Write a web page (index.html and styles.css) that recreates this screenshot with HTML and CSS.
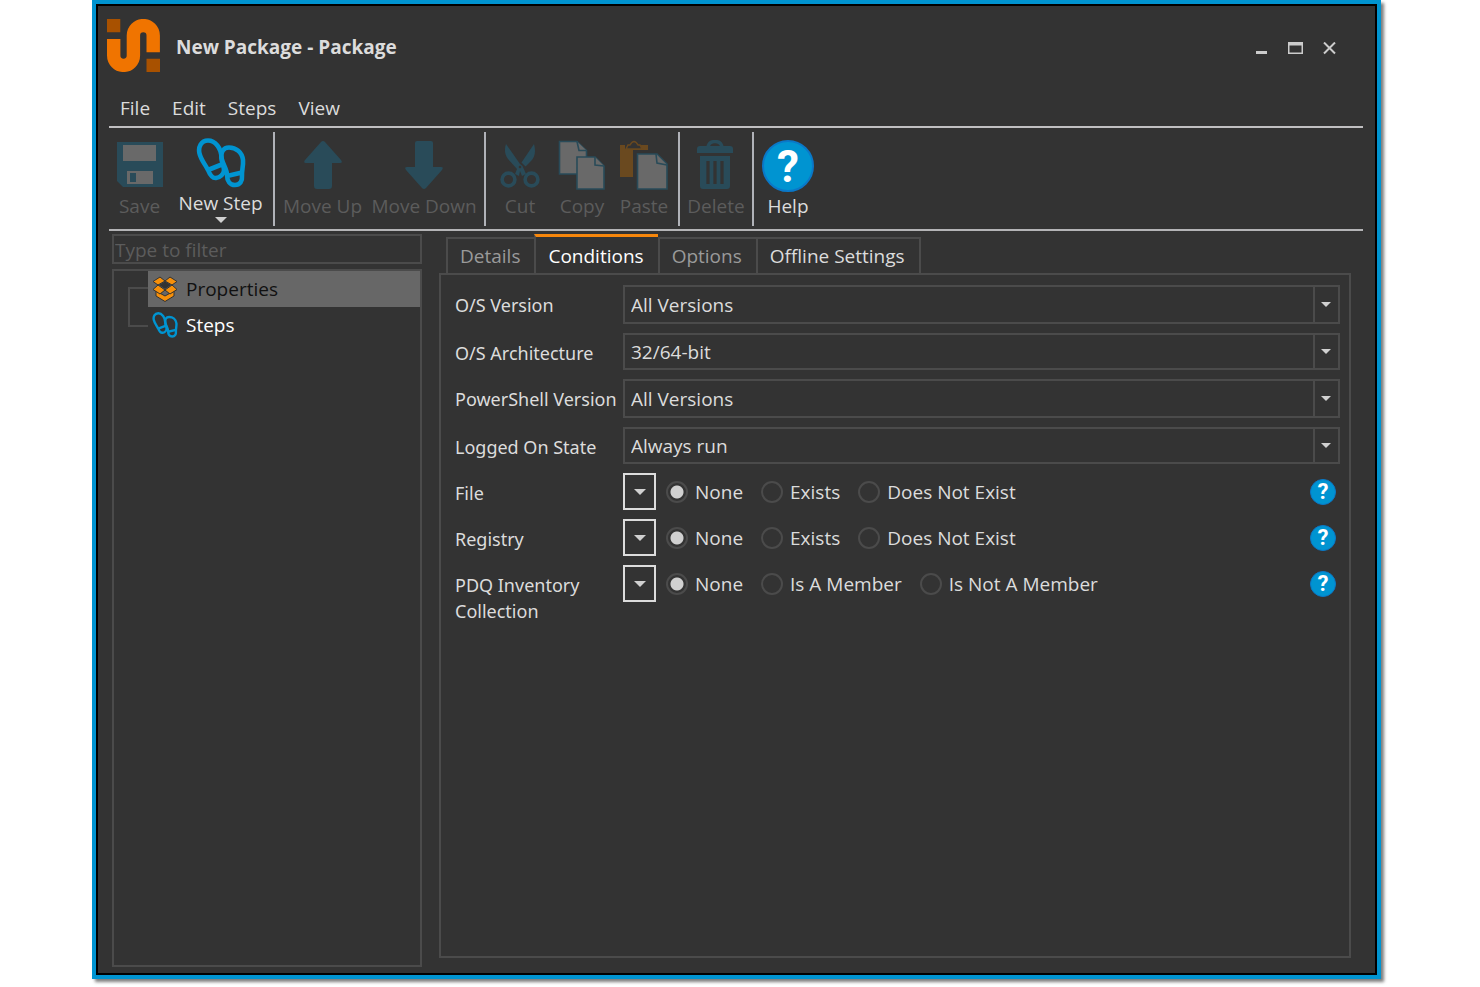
FILE: index.html
```html
<!DOCTYPE html>
<html lang="en">
<head>
  <meta charset="UTF-8">
  <title>New Package - Package</title>
  <link rel="stylesheet" href="styles.css">
</head>
<body>
  <!-- shared icons -->
  <svg class="icon-defs" aria-hidden="true">
    <symbol id="footprints" viewBox="0 0 50 50">
      <g fill="none" stroke="#0094d1" stroke-width="4.600" stroke-linejoin="round">
        <path d="M12 2.500C5 2.500 2 9 3.500 15.500C5 22 9 26 12 32C14 37 16 40.500 20 40C24 39.500 28 36 28 32C28 28 25.500 25 25.500 20C25.500 10 19 2.500 12 2.500Z"/>
        <path d="M12 32L27 26"/>
        <path d="M33 9.500C27 9.500 24.500 15 25.500 20C27 27 31 31 31 37C31 43 34 47 39 47C44 47 46.500 43 46 38C45.500 33 47.500 28 47 22C46 14 40 9.500 33 9.500Z"/>
        <path d="M31 38L46 34.500"/>
      </g>
    </symbol>
  </svg>

  <div class="window">
    <header class="title-bar">
      <svg class="logo" viewBox="0 0 53 53" aria-hidden="true">
        <path d="M0 0H13.300V13.300H0ZM39.500 39.700H53V53H39.500Z" fill="#a85100"/>
        <path d="M6.700 20V36.500a9.800 9.800 0 0 0 19.700 0V16.500a9.800 9.800 0 0 1 19.800 0V33.300" fill="none" stroke="#f07400" stroke-width="13.400"/>
      </svg>
      <h1>New Package - Package</h1>
      <div class="window-controls">
        <button aria-label="Minimize"><svg width="16" height="14"><path d="M2 9H13V12H2Z" fill="#ccc"/></svg></button>
        <button aria-label="Maximize"><svg width="16" height="14"><path d="M0 0H15V12H0ZM1.500 3.500V10.500H13.500V3.500Z" fill="#ccc" fill-rule="evenodd"/></svg></button>
        <button aria-label="Close"><svg width="16" height="14"><path d="M2 0.500L13 11.500M13 0.500L2 11.500" stroke="#ccc" stroke-width="2"/></svg></button>
      </div>
    </header>

    <nav class="menu">
      <button>File</button>
      <button>Edit</button>
      <button>Steps</button>
      <button>View</button>
    </nav>

    <div class="toolbar">
      <div class="tool-group">
        <button class="tool save" disabled>
          <svg width="46" height="50" viewBox="0 0 46 50">
            <path d="M0 2H46V47H6L0 41Z" fill="#294b59"/>
            <path d="M6 5H39V21H6ZM10 31H36V44H10Z" fill="#696969"/>
            <path d="M13 33H19V42H13Z" fill="#294b59"/>
          </svg>
          <span>Save</span>
        </button>
        <button class="tool new-step">
          <svg width="50" height="50"><use href="#footprints"/></svg>
          <span>New Step</span>
          <i class="arrow"></i>
        </button>
      </div>
      <div class="tool-group">
        <button class="tool move-up" disabled>
          <svg width="38" height="50" viewBox="0 0 38 50"><path d="M19 1Q20 1 21 2L37 20Q39 23 36 23H28V46Q28 49 25 49H13Q10 49 10 46V23H2Q-1 23 1 20L17 2Q18 1 19 1Z" fill="#294b59"/></svg>
          <span>Move Up</span>
        </button>
        <button class="tool move-down" disabled>
          <svg width="38" height="50" viewBox="0 0 38 50"><path d="M10 3Q10 1 12 1H26Q28 1 28 3V27H36Q39 27 37 30L21 48Q19 50 17 48L1 30Q-1 27 2 27H10Z" fill="#294b59"/></svg>
          <span>Move Down</span>
        </button>
      </div>
      <div class="tool-group">
        <button class="tool" disabled>
          <svg width="40" height="50" viewBox="0 0 40 50">
            <path d="M6 4C4 10 5 15 8 19L17 29L15 34L19 36L20 31L22 36L26 34L22.500 26L20 24ZM34 4C36 11 35 17 31 21L25.500 26.500L21.500 22.500Z" fill="#294b59"/>
            <g fill="none" stroke="#294b59" stroke-width="3.600"><circle cx="8.500" cy="39.500" r="6.400"/><circle cx="31.500" cy="39.500" r="6.400"/></g>
            <circle cx="20" cy="27" r="1.300" fill="#333"/>
          </svg>
          <span>Cut</span>
        </button>
        <button class="tool" disabled>
          <svg width="48" height="50" viewBox="0 0 48 50">
            <g fill="#696969" stroke="#294b59" stroke-width="1.600">
              <path d="M1.500 1.500H19L28.500 10.500V34H1.500Z"/><path d="M19 1.500L21 10.500H28.500"/>
              <path d="M19 17H37L46 26V49H19Z"/><path d="M37 17V25L46 26"/>
            </g>
          </svg>
          <span>Copy</span>
        </button>
        <button class="tool" disabled>
          <svg width="50" height="50" viewBox="0 0 50 50">
            <path d="M1 5H6V9H22V5H29V10H14V37H1Z" fill="#6a491f"/>
            <path d="M7 9L9 5H11Q15-2 19 5H21L23 9Z" fill="none" stroke="#6a491f" stroke-width="1.500"/>
            <g fill="#696969" stroke="#294b59" stroke-width="1.600"><path d="M18.500 14H38L48 24V49H18.500Z"/><path d="M37 14L38 23L48 25"/></g>
          </svg>
          <span>Paste</span>
        </button>
      </div>
      <div class="tool-group">
        <button class="tool delete" disabled>
          <svg width="38" height="50" viewBox="0 0 38 50">
            <path d="M11 7Q12 1.500 18 1.500T25 7" fill="none" stroke="#294b59" stroke-width="3.500"/>
            <path d="M3 6H33Q36 6 36 9V13H0V9Q0 6 3 6ZM3 16H33V46Q33 49 30 49H6Q3 49 3 46Z" fill="#294b59"/>
            <path d="M11 21V44M18 21V44M25 21V44" stroke="#333" stroke-width="3.200"/>
          </svg>
          <span>Delete</span>
        </button>
      </div>
      <div class="tool-group">
        <button class="tool help">
          <b class="help-icon large">?</b>
          <span>Help</span>
        </button>
      </div>
    </div>

    <main class="workspace">
      <aside class="sidebar">
        <input class="filter" type="text" placeholder="Type to filter" aria-label="Type to filter">
        <ul class="tree">
          <li>
            <button class="node selected">
              <svg width="26" height="26" viewBox="0 0 26 26">
                <g fill="#f7900a" stroke="#333" stroke-width="1" stroke-linejoin="round">
                  <path d="M4 15L13 20L22 15V20L13 25.500L4 20Z"/>
                  <path d="M8 1L13 5L6 9L1 5.500ZM18 1L25 5.500L20 9L13 5ZM6 9L13 14L8 18L1 13.500ZM20 9L25 13.500L18 18L13 14Z"/>
                </g>
                <path d="M13 5.500L19 9L13 13L7 9Z" fill="#333"/>
              </svg>
              Properties
            </button>
          </li>
          <li>
            <button class="node">
              <svg width="26" height="26"><use href="#footprints"/></svg>
              Steps
            </button>
          </li>
        </ul>
      </aside>

      <section class="editor">
        <div class="tabs" role="tablist">
          <button class="tab" role="tab">Details</button>
          <button class="tab active" role="tab" aria-selected="true">Conditions</button>
          <button class="tab" role="tab">Options</button>
          <button class="tab bright" role="tab">Offline Settings</button>
        </div>
        <form class="panel" role="tabpanel">
          <div class="row tall">
            <label for="osVersion">O/S Version</label>
            <div class="select"><select id="osVersion"><option>All Versions</option></select></div>
          </div>
          <div class="row">
            <label for="osArch">O/S Architecture</label>
            <div class="select"><select id="osArch"><option>32/64-bit</option></select></div>
          </div>
          <div class="row tall">
            <label for="psVersion">PowerShell Version</label>
            <div class="select"><select id="psVersion"><option>All Versions</option></select></div>
          </div>
          <div class="row">
            <label for="loggedOn">Logged On State</label>
            <div class="select"><select id="loggedOn"><option>Always run</option></select></div>
          </div>

          <div class="row" role="radiogroup" aria-labelledby="fileLabel">
            <span class="row-label" id="fileLabel">File</span>
            <div class="choices">
              <button type="button" class="drop" aria-label="File menu"><i class="arrow"></i></button>
              <label><input type="radio" name="file" checked>None</label>
              <label><input type="radio" name="file">Exists</label>
              <label><input type="radio" name="file">Does Not Exist</label>
              <button type="button" class="help-icon" aria-label="Help">?</button>
            </div>
          </div>
          <div class="row" role="radiogroup" aria-labelledby="registryLabel">
            <span class="row-label" id="registryLabel">Registry</span>
            <div class="choices">
              <button type="button" class="drop" aria-label="Registry menu"><i class="arrow"></i></button>
              <label><input type="radio" name="registry" checked>None</label>
              <label><input type="radio" name="registry">Exists</label>
              <label><input type="radio" name="registry">Does Not Exist</label>
              <button type="button" class="help-icon" aria-label="Help">?</button>
            </div>
          </div>
          <div class="row" role="radiogroup" aria-labelledby="collectionLabel">
            <span class="row-label" id="collectionLabel">PDQ Inventory Collection</span>
            <div class="choices">
              <button type="button" class="drop" aria-label="Collection menu"><i class="arrow"></i></button>
              <label><input type="radio" name="collection" checked>None</label>
              <label><input type="radio" name="collection">Is A Member</label>
              <label><input type="radio" name="collection">Is Not A Member</label>
              <button type="button" class="help-icon" aria-label="Help">?</button>
            </div>
          </div>
        </form>
      </section>
    </main>
  </div>
</body>
</html>
```

FILE: styles.css
```css
* {
  box-sizing: border-box;
}
body {
  margin: 0;
  background: #fff;
  color: #dcdcdc;
  font: 19px/26px "Open Sans", "Noto Sans", sans-serif;
}
button, input, select {
  font: inherit;
  color: inherit;
  background: none;
  border: none;
  margin: 0;
  padding: 0;
}
svg {
  display: block;
}
.icon-defs {
  width: 0;
  height: 0;
  position: absolute;
}
.window {
  display: flex;
  flex-direction: column;
  min-height: calc(100vh - 8px);
  margin: 0 99px 8px 92px;
  padding: 15px 14px 8px 13px;
  background: #333;
  border: 4px solid #0094d1;
  box-shadow: inset 0 0 0 2px #000, 3px 3px 3px rgba(0, 0, 0, 0.5);
}

/* Title bar */
.title-bar {
  display: flex;
  align-items: center;
}
.logo {
  width: 53px;
  height: 53px;
  margin-left: -2px;
}
.title-bar h1 {
  margin: 0 0 0 16px;
  padding-top: 2px;
  font-size: 19px;
  font-weight: bold;
}
.window-controls {
  display: flex;
  gap: 18px;
  margin-left: auto;
  margin-right: 25px;
  padding-top: 6px;
}

/* Menu */
.menu {
  display: flex;
  gap: 22px;
  height: 56px;
  padding: 18px 11px 0;
  border-bottom: 2px solid #c0bfc1;
}

/* Toolbar */
.toolbar {
  display: flex;
  padding: 4px 0 3px;
  border-bottom: 2px solid #b4b4b6;
}
.tool-group {
  display: flex;
  height: 94px;
  padding: 0 3px;
  border-right: 2px solid #b0b2b8;
}
.tool-group:last-child {
  border: none;
}
.tool {
  display: flex;
  flex-direction: column;
  align-items: center;
  width: 62px;
  padding-top: 8px;
  white-space: nowrap;
}
.tool svg {
  flex: none;
}
.tool span {
  margin-top: 3px;
}
.tool:disabled {
  color: #5c5c5c;
}
.save {
  width: 55px;
}
.new-step {
  width: 103px;
  padding: 6px 0 0 4px;
}
.new-step span {
  margin: 2px 0 1px;
}
.move-up {
  width: 89px;
}
.move-down {
  width: 114px;
}
.delete {
  width: 66px;
}
.help span {
  margin-top: 1px;
}
.arrow {
  width: 0;
  height: 0;
  border: 6px solid transparent;
  border-top-color: #d0d0d0;
  border-bottom: none;
}
.help-icon {
  width: 26px;
  height: 26px;
  background: #0094d1;
  border: 1px solid #0a78c8;
  border-radius: 50%;
  color: #fff;
  font: bold 22px/24px Roboto, sans-serif;
  text-align: center;
}
.help-icon.large {
  width: 52px;
  height: 52px;
  border-width: 2px;
  font-size: 44px;
  line-height: 50px;
}

/* Workspace */
.workspace {
  display: grid;
  grid-template-columns: 310px 1fr;
  gap: 17px;
  flex: 1;
  padding: 0 12px 0 3px;
}
.sidebar {
  display: flex;
  flex-direction: column;
  gap: 5px;
  padding-top: 3px;
}
.filter {
  height: 30px;
  padding: 1px 1px 0;
  border: 2px solid #4b4b4b;
}
.filter::placeholder {
  color: #5c5c5c;
  opacity: 1;
}
.tree {
  flex: 1;
  margin: 0;
  padding: 0 0 0 14px;
  border: 2px solid #4b4b4b;
  list-style: none;
}
.tree li {
  display: flex;
  height: 36px;
}
.tree li::before {
  content: "";
  width: 18px;
  height: 18px;
  border-left: 2px solid #4b4b4b;
}
.tree li:first-child::before {
  align-self: flex-end;
  border-top: 2px solid #4b4b4b;
}
.tree li:last-child::before {
  border-bottom: 2px solid #4b4b4b;
}
.node {
  display: flex;
  align-items: center;
  gap: 8px;
  flex: 1;
  padding-left: 4px;
  color: #fff;
}
.node.selected {
  background: #676767;
  color: #111;
}

/* Tabs */
.editor {
  display: flex;
  flex-direction: column;
  padding-bottom: 9px;
}
.tabs {
  display: flex;
  align-items: flex-end;
  height: 42px;
  padding-left: 7px;
}
.tab {
  height: 36px;
  padding: 0 14px 0 12px;
  border: 2px solid #4b4b4b;
  border-width: 2px 0 0 2px;
  color: #9a9a9a;
}
.tab:last-child {
  border-right-width: 2px;
}
.tab.active {
  height: 41px;
  margin-bottom: -2px;
  background: #333;
  border-top: 3px solid #f7870c;
  color: #fff;
}
.tab.bright {
  color: #dcdcdc;
}

/* Conditions form */
.panel {
  display: flex;
  flex-direction: column;
  gap: 9px;
  flex: 1;
  padding: 10px 9px 10px 14px;
  border: 2px solid #4b4b4b;
}
.row {
  display: grid;
  grid-template-columns: 168px 1fr;
  height: 37px;
}
.row.tall {
  height: 39px;
}
.row > label, .row-label {
  padding-top: 7px;
  font-family: "Noto Sans", sans-serif;
  font-size: 18px;
  white-space: nowrap;
}
.row-label {
  padding-right: 30px;
  white-space: normal;
}
.select {
  display: grid;
  grid-template-columns: 1fr 25px;
  align-items: center;
  justify-items: center;
  border: 2px solid #4b4b4b;
}
.select select {
  grid-area: 1 / 1 / 2 / 3;
  width: 100%;
  height: 100%;
  padding: 1px 30px 0 6px;
  appearance: none;
}
.select option {
  background: #333;
}
.select::after {
  content: "";
  grid-area: 1 / 2;
  border: 5px solid transparent;
  border-top-color: #d0d0d0;
  border-bottom: none;
  pointer-events: none;
}
.select::before {
  content: "";
  grid-area: 1 / 2;
  justify-self: start;
  width: 2px;
  height: 100%;
  background: #4b4b4b;
}
.choices {
  display: flex;
  align-items: center;
  height: 37px;
}
.choices label {
  display: flex;
  align-items: center;
  gap: 7px;
  margin-right: 18px;
}
.drop {
  display: flex;
  align-items: center;
  justify-content: center;
  width: 33px;
  height: 37px;
  margin-right: 10px;
  border: 2px solid #dcdcdc;
}
.choices input {
  width: 22px;
  height: 22px;
  border: 2px solid #4b4b4b;
  border-radius: 50%;
  appearance: none;
}
.choices input:checked {
  background: radial-gradient(circle, #d0d0d0 6px, transparent 7px);
}
.choices .help-icon {
  margin-left: auto;
  margin-right: 4px;
}
```
